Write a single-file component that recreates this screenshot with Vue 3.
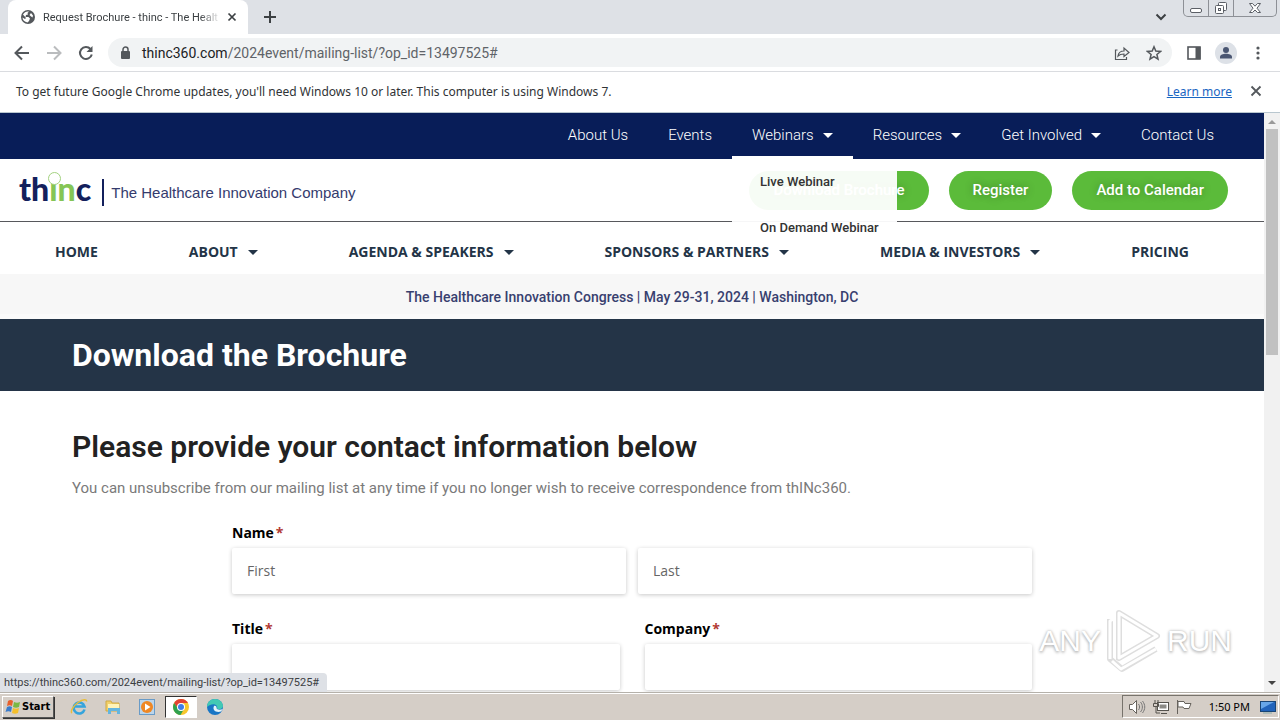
<script setup>
const topNav = [
  { label: 'About Us' },
  { label: 'Events' },
  { label: 'Webinars', caret: true, children: ['Live Webinar', 'On Demand Webinar'] },
  { label: 'Resources', caret: true },
  { label: 'Get Involved', caret: true },
  { label: 'Contact Us' },
]
const mainNav = [
  { label: 'HOME' },
  { label: 'ABOUT', caret: true },
  { label: 'AGENDA & SPEAKERS', caret: true },
  { label: 'SPONSORS & PARTNERS', caret: true },
  { label: 'MEDIA & INVESTORS', caret: true },
  { label: 'PRICING' },
]
</script>

<template>
  <div class="desktop">
    <header class="tabstrip">
      <div class="tab">
        <svg class="globe" width="14" height="14" viewBox="0 0 14 14"><circle cx="7" cy="7" r="7" fill="#54585c" /><path d="M8 1.500 6.500 3 7 4.500 5 5 4.500 7h3l1.500 1.500L8 11 6.500 12.500C3.500 12 1.500 10 1.500 7.500L4 9l1-1-3-3.500C3.500 2 5.500 1 8 1.500zM10 3l2 2.500-.5 2L9.500 6l-1-1z" fill="#fff" /></svg>
        <span class="tab-title">Request Brochure - thinc - The Healt</span>
        <button class="icon-btn" aria-label="Close tab"><svg width="10" height="10" viewBox="0 0 10 10"><path d="M1.500 1.500l7 7m0-7l-7 7" stroke="#3c4043" stroke-width="1.700" /></svg></button>
      </div>
      <button class="icon-btn newtab" aria-label="New tab"><svg width="12" height="12" viewBox="0 0 12 12"><path d="M6 0v12M0 6h12" stroke="#3c4043" stroke-width="2" /></svg></button>
      <button class="icon-btn tabsearch" aria-label="Search tabs"><svg width="12" height="8" viewBox="0 0 12 8"><path d="M1.500 1.500L6 6l4.500-4.500" fill="none" stroke="#3c4043" stroke-width="2" /></svg></button>
      <div class="winbtns">
        <button aria-label="Minimize"><svg width="14" height="14" viewBox="0 0 14 14"><rect x="1.500" y="8.500" width="11" height="4" rx="1.500" fill="#fff" stroke="#5b5f66" /></svg></button>
        <button aria-label="Restore"><svg width="14" height="14" viewBox="0 0 14 14"><rect x="4.500" y="2.500" width="8" height="8" rx="1" fill="#fff" stroke="#5b5f66" /><rect x="1.500" y="5.500" width="8" height="8" rx="1" fill="#fff" stroke="#5b5f66" /><rect x="4.500" y="8.500" width="2" height="2" fill="none" stroke="#5b5f66" /></svg></button>
        <button class="wide" aria-label="Close"><svg width="14" height="14" viewBox="0 0 14 14"><path d="M1.500 3.500h3L7 6.200l2.500-2.700h3L9 8.200l3.500 4.300h-3L7 10l-2.500 2.500h-3L5 8.200z" fill="#fff" stroke="#5b5f66" /></svg></button>
      </div>
    </header>

    <div class="toolbar">
      <button class="icon-btn" aria-label="Back"><svg width="16" height="16" viewBox="0 0 16 16"><path d="M15 8H2M8 1.500L1.500 8 8 14.500" fill="none" stroke="#54585c" stroke-width="2" /></svg></button>
      <button class="icon-btn" aria-label="Forward"><svg width="16" height="16" viewBox="0 0 16 16"><path d="M1 8h13M8 1.500L14.500 8 8 14.500" fill="none" stroke="#babcbe" stroke-width="2" /></svg></button>
      <button class="icon-btn" aria-label="Reload"><svg width="16" height="16" viewBox="0 0 16 16"><path d="M13.800 9.500A6 6 0 1 1 12.500 4" fill="none" stroke="#54585c" stroke-width="2" /><path d="M14.500 1v6h-6z" fill="#54585c" /></svg></button>
      <div class="omnibox">
        <svg width="10" height="14" viewBox="0 0 10 14"><rect x="1" y="5" width="9" height="8" rx="1" fill="#54585c" /><path d="M3 5.500V3.500a2.500 2.500 0 0 1 5 0v2" fill="none" stroke="#54585c" stroke-width="1.500" /></svg>
        <div class="url"><b>thinc360.com</b>/2024event/mailing-list/?op_id=13497525#</div>
        <button class="icon-btn" aria-label="Share"><svg width="16" height="16" viewBox="0 0 16 16"><path d="M3.500 5H1.500v9.500h11V12M4 11c.5-3.500 2.500-5 6-5V3l5 4.500-5 4V9C7.500 9 5.500 9.500 4 11z" fill="none" stroke="#54585c" stroke-width="1.200" /></svg></button>
        <button class="icon-btn" aria-label="Bookmark"><svg width="16" height="16" viewBox="0 0 16 16"><path d="M8 1.800l1.800 4.300 4.700.4-3.600 3 1.100 4.600L8 11.600l-4 2.500 1.100-4.600-3.600-3 4.700-.4z" fill="none" stroke="#54585c" stroke-width="1.500" /></svg></button>
      </div>
      <button class="icon-btn" aria-label="Side panel"><svg width="14" height="14" viewBox="0 0 14 14"><rect x="1" y="1" width="12" height="12" fill="none" stroke="#54585c" stroke-width="1.600" /><rect x="8.500" y="1" width="5" height="12" fill="#54585c" /></svg></button>
      <button class="icon-btn profile" aria-label="Profile"><svg width="22" height="22" viewBox="0 0 22 22"><circle cx="11" cy="11" r="11" fill="#dde1e7" /><circle cx="11" cy="8" r="3" fill="#4a5672" /><path d="M5 16.500v-1.500c0-2 3-3.200 6-3.200s6 1.200 6 3.200v1.500z" fill="#4a5672" /></svg></button>
      <button class="icon-btn" aria-label="Menu"><svg width="4" height="14" viewBox="0 0 4 14"><circle cx="2" cy="2" r="1.600" fill="#54585c" /><circle cx="2" cy="7" r="1.600" fill="#54585c" /><circle cx="2" cy="12" r="1.600" fill="#54585c" /></svg></button>
    </div>

    <div class="infobar">
      <span>To get future Google Chrome updates, you'll need Windows 10 or later. This computer is using Windows 7.</span>
      <a href="#">Learn more</a>
      <button class="icon-btn" aria-label="Dismiss"><svg width="12" height="12" viewBox="0 0 12 12"><path d="M1.500 1.500l9 9m0-9l-9 9" stroke="#54585c" stroke-width="1.800" /></svg></button>
    </div>

    <div class="viewport">
      <main class="page">
        <nav class="topnav">
          <div v-for="item in topNav" :key="item.label" class="top-item" :class="{ open: item.children }">
            <a href="#">{{ item.label }}<i v-if="item.caret" class="caret"></i></a>
            <div v-if="item.children" class="dropdown">
              <a v-for="child in item.children" :key="child" href="#">{{ child }}</a>
            </div>
          </div>
        </nav>

        <div class="brandrow">
          <a class="brand" href="#">
            <span class="word">th<span class="green"><span class="i-dot">ı</span>n</span>c</span>
            <span class="bar"></span>
            <span class="tagline">The Healthcare Innovation Company</span>
          </a>
          <div class="actions">
            <button>Download Brochure</button>
            <button>Register</button>
            <button>Add to Calendar</button>
          </div>
        </div>

        <nav class="mainnav">
          <a v-for="item in mainNav" :key="item.label" href="#">{{ item.label }}<i v-if="item.caret" class="caret"></i></a>
        </nav>

        <div class="datebar">The Healthcare Innovation Congress | May 29-31, 2024 | Washington, DC</div>
        <h1>Download the Brochure</h1>

        <section class="intro">
          <h2>Please provide your contact information below</h2>
          <p>You can unsubscribe from our mailing list at any time if you no longer wish to receive correspondence from thINc360.</p>
        </section>

        <form class="form" @submit.prevent>
          <label for="first">Name<em>*</em></label>
          <div class="pair names">
            <input id="first" type="text" placeholder="First" />
            <input type="text" placeholder="Last" aria-label="Last name" />
          </div>
          <div class="pair">
            <div><label for="title">Title<em>*</em></label><input id="title" type="text" /></div>
            <div><label for="company">Company<em>*</em></label><input id="company" type="text" /></div>
          </div>
        </form>
      </main>

      <div class="scrollbar">
        <i class="arrow up"></i>
        <div class="thumb"></div>
        <i class="arrow down"></i>
      </div>

      <div class="status">https://thinc360.com/2024event/mailing-list/?op_id=13497525#</div>

      <div class="watermark">
        <span>ANY</span>
        <svg width="58" height="64" viewBox="0 0 58 64">
          <g fill="none" stroke="#dedede" stroke-linejoin="round" stroke-width="6"><path d="M14 6v45M14 4l38 23-38 22zM5 10v40l12 10 34-20" /></g>
          <g fill="none" stroke="#fff" stroke-linejoin="round" stroke-width="3"><path d="M14 4l38 23-38 22zM10 9l-5 3v38M7 52l9 8 35-20" /></g>
        </svg>
        <span>RUN</span>
      </div>
    </div>

    <footer class="taskbar">
      <button class="start">
        <svg width="17" height="16" viewBox="0 0 17 16"><path d="M3 2c2-1.500 4-1 5 0L7 7C5.500 6 4 6 2 7z" fill="#e8602c" /><path d="M9 3c2 1 4 1 6 0l-1 5c-2 1-4 1-6 0z" fill="#7ab844" /><path d="M2 8c2-1 3.500-1 5 0l-1 5c-1.500-1-3.500-1-5.500 0z" fill="#3a7ccc" /><path d="M8 9c2 1 4 1 6 0l-1 5c-2 1-4 1-6 0z" fill="#f4bf2c" /></svg>
        Start
      </button>
      <div class="tasks">
        <button class="task" aria-label="Internet Explorer"><svg width="18" height="18" viewBox="0 0 18 18"><path d="M14.500 11.500A5.500 5.500 0 1 1 14.500 8.500H5" fill="none" stroke="#35a4dc" stroke-width="2.600" /><path d="M2 15c-2-1 1-7 6-10.500S17 1 16.500 3.500" fill="none" stroke="#e8bd3a" stroke-width="1.500" /></svg></button>
        <button class="task" aria-label="Explorer"><svg width="18" height="18" viewBox="0 0 18 18"><path d="M2 3h5l1 2h7v8H2z" fill="#f1d06b" stroke="#cfa944" /><path d="M4 6h11v6H4z" fill="#fff3b8" /><path d="M4 10h12v6h-3v-3H7v3H4z" fill="#64b5df" /></svg></button>
        <button class="task" aria-label="Media Player"><svg width="18" height="18" viewBox="0 0 18 18"><rect x="1.500" y="1.500" width="15" height="15" fill="#bcd5ea" stroke="#699bc7" /><circle cx="9" cy="9" r="6" fill="#ef8723" /><path d="M7 5.500l5.500 3.500L7 12.500z" fill="#fff" /></svg></button>
        <button class="task active" aria-label="Chrome"><svg width="18" height="18" viewBox="0 0 18 18"><circle cx="9" cy="9" r="8" fill="#f7c62c" /><path d="M2.100 5A8 8 0 0 1 16 5H9L6 10.500z" fill="#e34234" /><path d="M2.100 5A8 8 0 0 0 8.500 17l3.500-6-6-.5z" fill="#2fa14f" /><circle cx="9" cy="9" r="4" fill="#fff" /><circle cx="9" cy="9" r="3" fill="#3f7de8" /></svg></button>
        <button class="task" aria-label="Edge"><svg width="18" height="18" viewBox="0 0 18 18"><circle cx="9" cy="9" r="8" fill="#1976c5" /><path d="M1 9C1 4 4.500 1 9 1s8 3.500 8 7c0 3-4 4-6 2.500C12.500 6.500 6 4 1 9z" fill="#43c9b4" /><path d="M8 8c-2 4 2 7 7 5.500l2-2.500c-3 1-6 1-6.500-1C11 9 9.500 7 8 8z" fill="#e5f4fa" /></svg></button>
      </div>
      <div class="tray">
        <svg width="18" height="16" viewBox="0 0 18 16"><path d="M1.500 5.500h3l4-4v13l-4-4h-3z" fill="#fff" stroke="#66625c" /><path d="M10.500 5c1.500 2 1.500 4 0 6M12.500 3c2.500 3 2.500 7 0 10M14.500 2c3 4 3 8 0 12" fill="none" stroke="#777" /></svg>
        <svg width="16" height="16" viewBox="0 0 16 16"><rect x="4.500" y="3.500" width="11" height="8" fill="#fff" stroke="#55524d" /><rect x="6.500" y="5.500" width="7" height="4" fill="#8b8985" /><path d="M8 14.500h6M2 1v3M5 1v3M.5 4.500h5v3h-5zM3 8v6h4" fill="none" stroke="#55524d" /></svg>
        <svg width="16" height="16" viewBox="0 0 16 16"><path d="M1.500 1v14M2 2.500h6l1 2h6l-2 5H8l-1-1.500H2z" fill="#fff" stroke="#66625c" /></svg>
        <time>1:50 PM</time>
        <svg width="16" height="14" viewBox="0 0 16 14"><rect x=".5" y="1.500" width="15" height="10" fill="#2163ba" stroke="#194575" /><path d="M1 2h13L1 9z" fill="#67a6e8" /><path d="M3 13h9" stroke="#8aa" /></svg>
      </div>
    </footer>
  </div>
</template>

<style>
body { margin: 0; overflow: hidden; }
</style>

<style scoped>
* { box-sizing: border-box; }
a { color: inherit; text-decoration: none; }
button { font: inherit; border: 0; margin: 0; padding: 0; background: none; color: inherit; }
svg { display: block; flex: none; }
.desktop { height: 100vh; display: flex; flex-direction: column; background: #fff; font-family: "Noto Sans", sans-serif; }
.icon-btn { display: flex; align-items: center; justify-content: center; }

.tabstrip { flex: none; height: 34px; background: #dee1e6; display: flex; align-items: center; padding-left: 8px; font-size: 11px; color: #3c4043; }
.tab { width: 240px; height: 34px; background: #fff; border-radius: 8px 8px 0 0; display: flex; align-items: center; padding: 0 11px 0 13px; }
.tab-title { flex: 1; margin: 0 6px 0 8px; font-family: Roboto, sans-serif; white-space: nowrap; mask-image: linear-gradient(90deg, #000 88%, transparent); }
.newtab { margin-left: 16px; }
.tabsearch { margin-left: auto; margin-right: 16px; }
.winbtns { align-self: flex-start; display: flex; height: 17px; margin-right: 3px; border: 1px solid #8d9096; border-top: 0; border-radius: 0 0 5px 5px; }
.winbtns button { width: 25px; display: flex; justify-content: center; border-right: 1px solid #8d9096; }
.winbtns .wide { width: 42px; border-right: 0; }

.toolbar { flex: none; height: 38px; border-bottom: 1px solid #dadce0; display: flex; align-items: center; padding: 0 20px 0 14px; gap: 16px; }
.omnibox { flex: 1; height: 29px; margin: 0 -1px 0 -2px; border-radius: 15px; background: #f1f3f4; display: flex; align-items: center; gap: 16px; padding: 0 10px 0 12px; font-size: 14px; color: #5f6368; }
.profile { margin: 0 3px 0 -2px; }
.url { flex: 1; margin-left: -4px; font-family: Roboto, sans-serif; white-space: nowrap; }
.url b { font-weight: 400; color: #202124; }

.infobar { flex: none; height: 41px; border-bottom: 1px solid #b9c7cf; display: flex; align-items: center; padding: 0 18px 2px 16px; font-size: 12px; color: #303336; }
.infobar a { margin-left: auto; margin-right: 18px; color: #1a66c2; text-decoration: underline; }

.viewport { flex: 1; min-height: 0; display: flex; position: relative; overflow: hidden; }
.page { flex: 1; min-width: 0; overflow: hidden; font-family: Roboto, sans-serif; }
.caret { display: inline-block; margin-left: 10px; border: 5px solid transparent; border-top-color: currentColor; border-bottom: 0; vertical-align: 2px; }

.topnav { height: 46px; background: #081d58; color: #fff; display: flex; justify-content: flex-end; padding-right: 30px; font-size: 15px; font-weight: 300; }
.topnav .caret { margin-left: 9px; }
.top-item { position: relative; display: flex; align-items: center; padding: 0 20px; white-space: nowrap; }
.top-item > a { padding-bottom: 2px; }
.open { border-bottom: 3px solid #fff; padding-top: 3px; }
.dropdown { position: absolute; z-index: 2; top: 46px; left: 0; width: 165px; height: 86px; background: rgba(255, 255, 255, 0.95); color: #333; font-size: 13px; font-weight: 500; }
.dropdown a { display: flex; align-items: center; height: 46px; padding: 0 0 2px 28px; }

.brandrow { height: 63px; border-bottom: 1px solid #57585c; display: flex; align-items: center; justify-content: space-between; padding: 0 36px 0 19px; }
.brand { display: flex; align-items: center; color: #13205c; white-space: nowrap; }
.word { font: 900 32px/36px "Lato", sans-serif; padding-bottom: 2px; }
.green { color: #85c555; }
.i-dot { position: relative; }
.i-dot::before { content: ""; position: absolute; left: -1px; top: 3px; width: 11px; height: 11px; border: 1px solid #a3d27f; border-radius: 50%; background: #fff; }
.bar { width: 2px; height: 27px; margin: 4px 7px 0 11px; background: #13205c; }
.tagline { font: 15px/20px "Liberation Sans", sans-serif; color: #343b6d; padding-top: 6px; }
.actions { display: flex; gap: 20px; }
.actions button { height: 39px; padding: 0 24px; border-radius: 20px; background: #5bbb3a; color: #fff; font-size: 15px; font-weight: 500; text-shadow: 0 0 8px rgba(0, 0, 0, 0.3); white-space: nowrap; }

.mainnav { height: 52px; display: flex; align-items: center; justify-content: space-between; padding: 8px 75px 0 55px; font: 700 14px/20px "Open Sans", sans-serif; color: #233447; white-space: nowrap; }
.datebar { height: 45px; background: #f7f7f7; border-bottom: 5px solid #fafafa; text-align: center; font-size: 14px; font-weight: 500; line-height: 46px; color: #38406f; }
h1 { margin: 0; height: 72px; padding-left: 72px; background: #243447; color: #fff; font-size: 32px; line-height: 72px; font-weight: 700; }
.intro { padding: 36px 72px 0; }
h2 { margin: 0; font-size: 30px; line-height: 40px; font-weight: 600; color: #222; }
p { margin: 11px 0 0; font-size: 15px; line-height: 20px; color: #7a7a7a; }

.form { width: 800px; max-width: 100%; margin: 25px auto 0; font-family: "Open Sans", sans-serif; }
label { display: block; font-size: 14px; line-height: 20px; font-weight: 700; color: #000; margin-bottom: 5px; }
em { font-style: normal; color: #b23a34; margin-left: 2px; }
.pair { display: grid; grid-template-columns: 1fr 1fr; gap: 25px; }
.names { gap: 12px; margin-bottom: 25px; }
input { display: block; width: 100%; height: 46px; border: 0; border-radius: 2px; background: #fff; box-shadow: 0 1px 4px rgba(0, 0, 0, 0.22); padding: 0 15px 2px; font: 14px "Open Sans", sans-serif; }
input::placeholder { color: #666; opacity: 1; }

.scrollbar { flex: none; width: 16px; background: #f1f1f1; display: flex; flex-direction: column; align-items: center; padding: 7px 0; }
.arrow { border: 4px solid transparent; }
.up { border-bottom-color: #999; border-top: 0; }
.down { border-top-color: #444; border-bottom: 0; margin-top: auto; }
.thumb { width: 12px; height: 226px; margin-top: 5px; background: #c1c1c1; }

.status { position: absolute; left: 0; bottom: 0; height: 19px; padding: 0 8px 0 4px; border-radius: 0 4px 0 0; background: #dee1e6; color: #3c4043; font: 11px/20px Roboto, sans-serif; }
.watermark { position: absolute; right: 48px; bottom: 19px; display: flex; align-items: center; gap: 4px; font: 30px/44px "Liberation Sans Narrow", "Liberation Sans", sans-serif; color: #fff; text-shadow: 0 0 3px #aaa, 0 2px 3px #ccc; }

.taskbar { flex: none; height: 28px; background: #d5cec7; border-top: 1px solid #b5b1aa; box-shadow: inset 0 1px #fff; display: flex; align-items: center; padding: 2px 1px 2px 2px; color: #000; }
.start { display: flex; align-items: center; width: 52px; height: 22px; padding-left: 2px; border: 1px solid; border-color: #fff #555 #555 #fff; box-shadow: 1px 1px #333; font: 700 11px "DejaVu Sans Condensed", "DejaVu Sans", sans-serif; }
.tasks { display: flex; margin-left: 9px; gap: 2px; }
.task { width: 32px; height: 22px; display: flex; align-items: center; justify-content: center; }
.active { background: #fff; border: 1px solid; border-color: #333 #fff #fff #333; }
.tray { margin-left: auto; height: 23px; display: flex; align-items: center; gap: 7px; padding: 0 2px 0 5px; border: 1px solid; border-color: #77736c #fff #fff #77736c; font-size: 11px; }
time { margin: 0 3px 0 10px; }
</style>
